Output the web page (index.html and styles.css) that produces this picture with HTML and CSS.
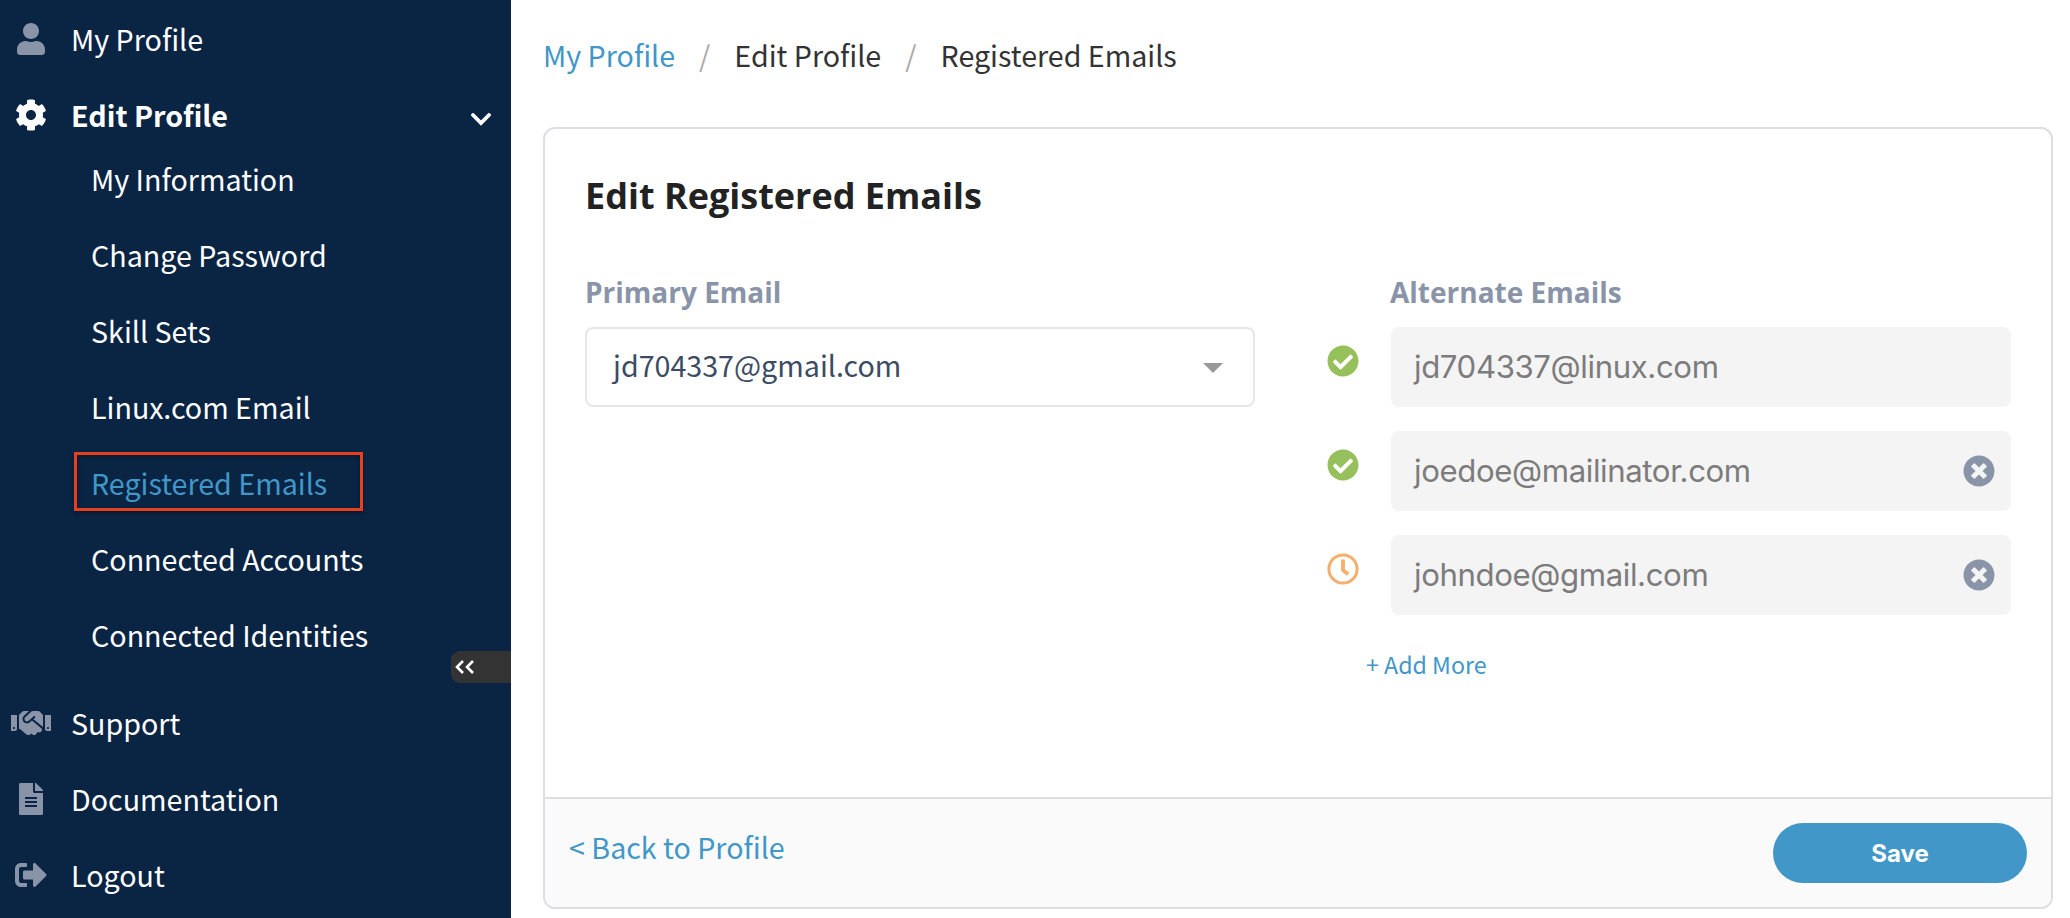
FILE: index.html
```html
<!DOCTYPE html>
<html lang="en">
<head>
<meta charset="utf-8">
<title>Registered Emails</title>
<link rel="stylesheet" href="styles.css">
</head>
<body>
<svg class="defs" width="0" height="0" aria-hidden="true">
  <symbol id="check" viewBox="0 0 512 512"><path d="M504 256c0 136.967-111.033 248-248 248S8 392.967 8 256 119.033 8 256 8s248 111.033 248 248zM227.314 387.314l184-184c6.248-6.248 6.248-16.379 0-22.627l-22.627-22.627c-6.248-6.249-16.379-6.249-22.628 0L216 308.118l-70.059-70.059c-6.248-6.248-16.379-6.248-22.628 0l-22.627 22.627c-6.248 6.248-6.248 16.379 0 22.627l104 104c6.249 6.249 16.379 6.249 22.628.001z"/></symbol>
  <symbol id="times" viewBox="0 0 512 512"><path d="M256 8C119 8 8 119 8 256s111 248 248 248 248-111 248-248S393 8 256 8zm121.6 313.1c4.7 4.7 4.7 12.3 0 17L338 377.6c-4.7 4.7-12.3 4.7-17 0L256 312l-65.1 65.6c-4.7 4.7-12.3 4.7-17 0L134.4 338c-4.7-4.7-4.7-12.3 0-17l65.6-65-65.6-65.1c-4.7-4.7-4.7-12.3 0-17l39.6-39.6c4.7-4.7 12.3-4.7 17 0l65 65.7 65.1-65.6c4.7-4.7 12.3-4.7 17 0l39.6 39.6c4.7 4.7 4.7 12.3 0 17L312 256l65.6 65.1z"/></symbol>
</svg>
<div class="app">
  <aside class="sidebar">
    <nav class="nav">
      <a class="nav-item"><span class="nav-icon"><svg width="28" height="32" viewBox="0 0 448 512"><path d="M224 256c70.7 0 128-57.3 128-128S294.7 0 224 0 96 57.3 96 128s57.3 128 128 128zm89.6 32h-16.7c-22.2 10.2-46.9 16-72.9 16s-50.6-5.8-72.9-16h-16.7C60.2 288 0 348.2 0 422.4V464c0 26.5 21.5 48 48 48h352c26.5 0 48-21.5 48-48v-41.6c0-74.2-60.2-134.4-134.4-134.4z"/></svg></span><span class="nav-text">My Profile</span></a>
      <a class="nav-item open"><span class="nav-icon"><svg width="32" height="32" viewBox="0 0 512 512"><path d="M487.4 315.7l-42.6-24.6c4.3-23.2 4.3-47 0-70.2l42.6-24.6c4.9-2.8 7.1-8.6 5.5-14-11.1-35.6-30-67.8-54.7-94.6-3.8-4.1-10-5.1-14.8-2.3L380.8 110c-17.9-15.4-38.5-27.3-60.8-35.1V25.8c0-5.6-3.9-10.5-9.4-11.7-36.7-8.2-74.3-7.8-109.2 0-5.5 1.2-9.4 6.1-9.4 11.7V75c-22.2 7.9-42.8 19.8-60.8 35.1L88.7 85.5c-4.9-2.8-11-1.9-14.8 2.3-24.7 26.7-43.6 58.9-54.7 94.6-1.7 5.4.6 11.2 5.5 14L67.3 221c-4.3 23.2-4.3 47 0 70.2l-42.6 24.6c-4.9 2.8-7.1 8.6-5.5 14 11.1 35.6 30 67.8 54.7 94.6 3.8 4.1 10 5.1 14.8 2.3l42.6-24.6c17.9 15.4 38.5 27.3 60.8 35.1v49.2c0 5.6 3.9 10.5 9.4 11.7 36.7 8.2 74.3 7.8 109.2 0 5.5-1.2 9.4-6.1 9.4-11.7v-49.2c22.2-7.9 42.8-19.8 60.8-35.1l42.6 24.6c4.9 2.8 11 1.9 14.8-2.3 24.7-26.7 43.6-58.9 54.7-94.6 1.5-5.5-.7-11.3-5.6-14.1zM256 336c-44.1 0-80-35.900-80-80s35.900-80 80-80 80 35.900 80 80-35.900 80-80 80z"/></svg></span><span class="nav-text">Edit Profile</span><svg class="chevron" width="20" height="13" viewBox="0 0 20 13"><path d="M2 2l8 8 8-8"/></svg></a>
      <div class="subnav">
        <a class="sub-item">My Information</a>
        <a class="sub-item">Change Password</a>
        <a class="sub-item">Skill Sets</a>
        <a class="sub-item">Linux.com Email</a>
        <a class="sub-item current"><span class="highlight">Registered Emails</span></a>
        <a class="sub-item">Connected Accounts</a>
        <a class="sub-item">Connected Identities</a>
      </div>
      <a class="nav-item"><span class="nav-icon"><svg width="40" height="32" viewBox="0 0 640 512"><path d="M434.7 64h-85.9c-8 0-15.7 3-21.6 8.4l-98.3 90c-.1.1-.2.3-.3.4-16.6 15.6-16.3 40.5-2.1 56 12.7 13.9 39.4 17.6 56.1 2.7.1-.1.3-.1.4-.2l79.9-73.2c6.5-5.9 16.7-5.5 22.6 1 6 6.5 5.5 16.6-1 22.6l-26.1 23.9L504 313.8c2.9 2.4 5.5 5 7.9 7.7V128l-54.6-54.6c-5.9-6-14.1-9.4-22.6-9.4zM544 128.2v223.9c0 17.7 14.3 32 32 32h64V128.2h-96zm48 223.9c-8.8 0-16-7.2-16-16s7.2-16 16-16 16 7.2 16 16-7.2 16-16 16zM0 384h64c17.7 0 32-14.3 32-32V128.2H0V384zm48-63.900c8.800 0 16 7.200 16 16s-7.200 16-16 16-16-7.200-16-16c0-8.900 7.200-16 16-16zm435.900 18.600L334.600 217.500l-30 27.500c-29.700 27.100-75.200 24.500-101.700-4.400-26.900-29.400-24.800-74.900 4.400-101.700L289.100 64h-83.800c-8.500 0-16.600 3.400-22.600 9.400L128 128v223.900h18.300l90.500 81.900c27.400 22.300 67.700 18.100 90-9.300l.2-.2 17.900 15.500c15.900 13 39.400 10.500 52.300-5.400l31.400-38.600 5.400 4.400c13.700 11.100 33.900 9.100 45-4.700l9.500-11.700c11.200-13.800 9.100-33.900-4.600-45.100z"/></svg></span><span class="nav-text">Support</span></a>
      <a class="nav-item"><span class="nav-icon"><svg width="24" height="32" viewBox="0 0 384 512"><path fill-rule="evenodd" d="M224 136V0H24C10.700 0 0 10.700 0 24v464c0 13.300 10.700 24 24 24h336c13.300 0 24-10.700 24-24V160H248c-13.200 0-24-10.800-24-24zM96 224H288V256H96zM96 288H288V320H96zM96 352H288V384H96zM384 121.900v6.100H256V0h6.100c6.400 0 12.500 2.500 17 7l97.900 98c4.500 4.500 7 10.600 7 16.900z"/></svg></span><span class="nav-text">Documentation</span></a>
      <a class="nav-item"><span class="nav-icon"><svg width="32" height="32" viewBox="0 0 512 512"><path d="M497 273L329 441c-15 15-41 4.500-41-17v-96H152c-13.300 0-24-10.700-24-24v-96c0-13.300 10.700-24 24-24h136V88c0-21.400 25.900-32 41-17l168 168c9.300 9.400 9.300 24.600 0 34zM192 436v-40c0-6.600-5.400-12-12-12H96c-17.700 0-32-14.300-32-32V160c0-17.700 14.300-32 32-32h84c6.600 0 12-5.400 12-12V76c0-6.600-5.400-12-12-12H96c-53 0-96 43-96 96v192c0 53 43 96 96 96h84c6.600 0 12-5.400 12-12z"/></svg></span><span class="nav-text">Logout</span></a>
    </nav>
    <button class="collapse" aria-label="Collapse menu"><svg width="20" height="14" viewBox="0 0 20 14"><path d="M8 1L2 7l6 6M18 1l-6 6 6 6"/></svg></button>
  </aside>
  <main class="main">
    <div class="breadcrumb"><a class="link">My Profile</a><span class="sep">/</span><span>Edit Profile</span><span class="sep">/</span><span>Registered Emails</span></div>
    <section class="card">
      <div class="card-body">
        <h1 class="title">Edit Registered Emails</h1>
        <div class="columns">
          <div class="primary">
            <div class="label">Primary Email</div>
            <div class="select"><span>jd704337@gmail.com</span><svg width="20" height="10" viewBox="0 0 20 10"><path d="M0 0h20L10 10z"/></svg></div>
          </div>
          <div class="alternate">
            <div class="label alt-label">Alternate Emails</div>
            <div class="email-row"><svg class="status ok"><use href="#check"/></svg><div class="field"><span>jd704337@linux.com</span></div></div>
            <div class="email-row"><svg class="status ok"><use href="#check"/></svg><div class="field"><span>joedoe@mailinator.com</span><svg class="remove"><use href="#times"/></svg></div></div>
            <div class="email-row"><svg class="status wait" viewBox="0 0 32 32"><circle cx="16" cy="16" r="14.100"/><path d="M16 6.500V17l5 4.200"/></svg><div class="field"><span>johndoe@gmail.com</span><svg class="remove"><use href="#times"/></svg></div></div>
            <a class="add link">+ Add More</a>
          </div>
        </div>
      </div>
      <footer class="card-footer"><a class="link back">&lt; Back to Profile</a><button class="save">Save</button></footer>
    </section>
  </main>
</div>
</body>
</html>
```
FILE: styles.css
```css
* { box-sizing: border-box; }
body {
  margin: 0;
  background: #fff;
  font-family: "Noto Sans CJK SC", "Open Sans", sans-serif;
  font-size: 28.650px;
  color: #333;
}
svg { display: block; flex: none; }
.defs { position: absolute; }
.app { display: flex; height: 918px; overflow: hidden; }

.sidebar {
  position: relative;
  flex: none;
  width: 511px;
  background: #0a2444;
  color: #fff;
}
.nav { display: flex; flex-direction: column; white-space: nowrap; }
.nav-item {
  display: flex;
  align-items: center;
  height: 76px;
  padding: 0 20px 0 11px;
}
.nav-text { padding-top: 2px; line-height: 76px; }
.nav-icon {
  display: flex;
  justify-content: center;
  width: 40px;
  margin: 2px 20px 0 0;
}
.nav-icon svg { fill: #8a94a8; }
.open { font-weight: 700; }
.open .nav-icon svg { fill: #fff; }
.chevron {
  margin: 10px 0 0 auto;
  fill: none;
  stroke: #fff;
  stroke-width: 3.800;
  stroke-linecap: round;
}
.subnav { margin: -12px 0 12px; }
.sub-item {
  display: flex;
  align-items: center;
  height: 76px;
  padding: 2px 0 0 91px;
  line-height: 74px;
}
.current { padding: 0 0 1px 74px; color: #4197c7; }
.highlight {
  width: 289px;
  height: 59px;
  padding-left: 14px;
  border: 3px solid #e8401f;
  line-height: 55px;
  box-shadow: 0 2px 4px rgba(0, 0, 0, .4), inset 0 2px 4px rgba(0, 0, 0, .3);
}
.collapse {
  position: absolute;
  top: 651px;
  right: 0;
  width: 60px;
  height: 32px;
  padding: 0 0 0 4px;
  border: 0;
  border-radius: 9px 0 0 9px;
  background: #333;
}
.collapse svg { fill: none; stroke: #fff; stroke-width: 2.600; }

.main { display: flex; flex-direction: column; flex: 1; padding: 0 17px 9px 32px; }
.breadcrumb { display: flex; height: 127px; line-height: 110px; }
.link { color: #4197c7; }
.sep { width: 59.300px; text-align: center; color: #aaa; }
.card {
  display: flex;
  flex-direction: column;
  flex: 1;
  overflow: hidden;
  border: 2px solid #dddee3;
  border-radius: 12px;
}
.card-body { flex: 1; padding: 42px 40px 0; }
.title {
  margin: 0;
  font: 700 36px/50px "Open Sans", sans-serif;
  color: #222;
}
.columns { display: flex; justify-content: space-between; margin-top: 51px; }
.primary { width: 670px; }
.alternate { width: 684px; }
.label {
  height: 55px;
  font: 700 28px/40px "Open Sans", sans-serif;
  color: #8a94a8;
}
.alt-label { padding-left: 63px; }
.select {
  display: flex;
  justify-content: space-between;
  align-items: center;
  height: 80px;
  padding: 0 30px 0 26px;
  border: 2px solid #e6e6e6;
  border-radius: 8px;
  line-height: 76px;
  color: #3b4b63;
}
.select span { margin-top: -5px; }
.select svg { fill: #999; margin-top: 2px; }
.email-row { display: flex; margin-bottom: 24px; }
.status { width: 32px; height: 32px; margin: 18px 32px 0 0; }
.ok { fill: #96c05c; }
.wait { fill: none; stroke: #f5ae6b; stroke-width: 3; }
.wait path { stroke-width: 3.800; stroke-linejoin: round; }
.field {
  display: flex;
  flex: 1;
  justify-content: space-between;
  align-items: center;
  height: 80px;
  padding: 0 16px 0 23px;
  border-radius: 8px;
  background: #f4f4f4;
  font: 31.200px/80px Inter, sans-serif;
  letter-spacing: -.400px;
  color: #7c7c7c;
}
.remove { width: 32px; height: 32px; fill: #8a94a8; }
.add { display: block; margin: 27px 0 0 39px; font-size: 23.200px; line-height: 44px; }
.card-footer {
  display: flex;
  justify-content: space-between;
  align-items: center;
  height: 110px;
  padding: 0 24px;
  border-top: 2px solid #dedede;
  background: #fafafa;
}
.back { margin-top: -13px; }
.save {
  width: 254px;
  height: 60px;
  border: 0;
  border-radius: 30px;
  background: #4197c7;
  color: #fff;
  font: 700 24px Inter, sans-serif;
}
```
